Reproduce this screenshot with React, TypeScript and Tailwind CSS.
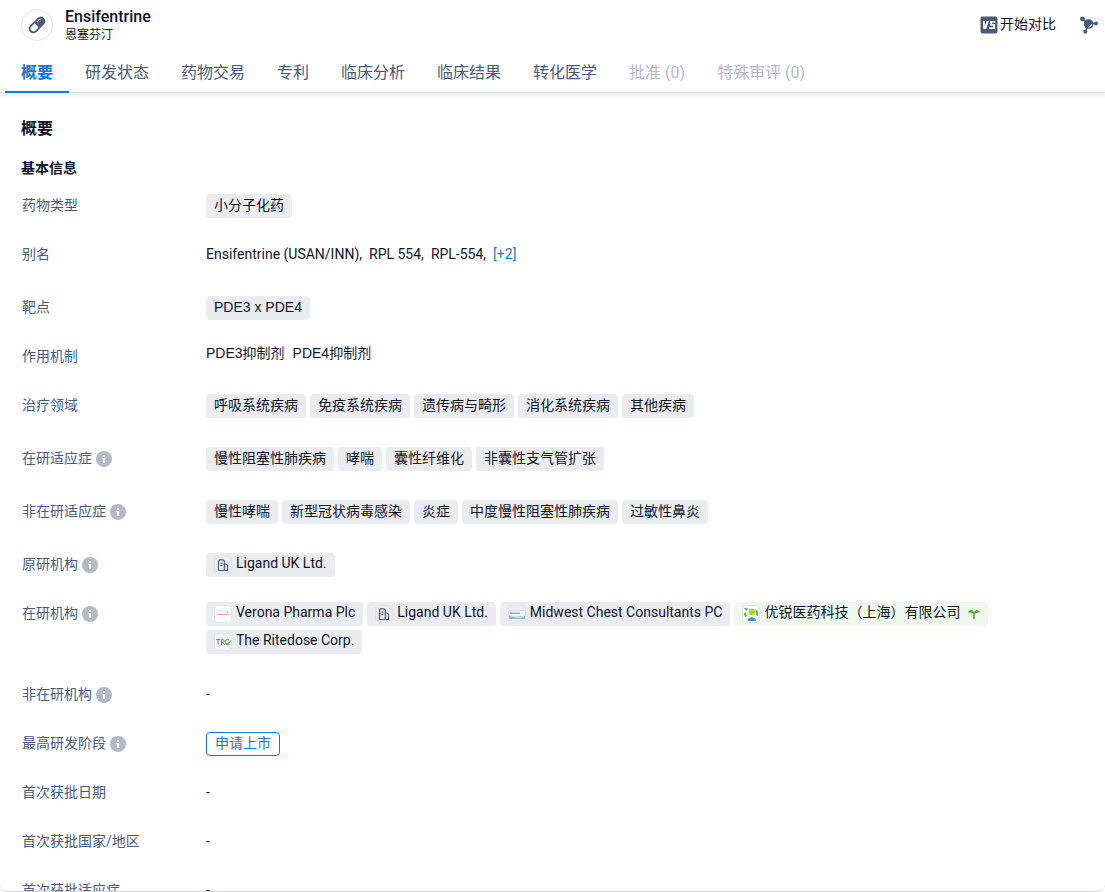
import type { ReactNode } from "react";

const tabs = [
  { label: "概要", active: true },
  { label: "研发状态" },
  { label: "药物交易" },
  { label: "专利" },
  { label: "临床分析" },
  { label: "临床结果" },
  { label: "转化医学" },
  { label: "批准 (0)", disabled: true },
  { label: "特殊审评 (0)", disabled: true },
];

function PillIcon() {
  return (
    <svg viewBox="0 0 18 18" className="size-[18px]" aria-hidden="true">
      <g transform="rotate(-45 9 9)">
        <rect x="-0.8" y="4.5" width="19.6" height="9" rx="4.5" fill="#495b7a" />
        <path d="M8.5 6.2H4a2.8 2.8 0 0 0 0 5.6h4.5z" fill="#fff" />
        <path d="M11 6.8h3.200a2 2 0 0 1 1.500.8" stroke="#fff" strokeWidth="1" fill="none" />
      </g>
    </svg>
  );
}

function VsIcon() {
  return (
    <svg viewBox="0 0 18 18" className="size-[18px]" aria-hidden="true">
      <rect x="0.5" y="0.5" width="17" height="17" rx="2" fill="#495b7a" />
      <path d="M2.800 5h2v5.200L6.600 5h2.200L6.200 13H3.400z" fill="#fff" />
      <path d="M15.400 5.900h-4.300v3h3.100v3.200H9.200" fill="none" stroke="#fff" strokeWidth="1.800" />
    </svg>
  );
}

function MoleculeIcon() {
  return (
    <svg viewBox="0 0 18 18" className="size-[18px]" aria-hidden="true">
      <g stroke="#495b7a" strokeWidth="1.6">
        <path d="M2.5 3l6 5M16 7.500H9M5.300 15.500l3-6" />
      </g>
      <g fill="#495b7a">
        <circle cx="8.600" cy="8" r="4.800" />
        <circle cx="2.400" cy="2.800" r="2.400" />
        <circle cx="16" cy="7.400" r="2" />
        <circle cx="5.300" cy="15.700" r="2" />
      </g>
      <path d="M11.600 8.200a3.200 3.200 0 0 1-3 3" stroke="#fff" strokeWidth="1" fill="none" />
    </svg>
  );
}

function InfoIcon() {
  return (
    <svg viewBox="0 0 16 16" className="size-4" aria-hidden="true">
      <circle cx="8" cy="8" r="8" fill="#b3b9c7" />
      <path d="M7 4h2v2H7zM6.500 7H9v5H7V8h-.5z" fill="#fff" />
    </svg>
  );
}

function BuildingLogo() {
  return (
    <svg viewBox="0 0 18 18" className="size-[18px]" aria-hidden="true">
      <rect x="0.5" y="0.5" width="17" height="17" rx="3" fill="#ebedf1" stroke="#e0e3ea" />
      <path
        d="M4.500 14.500V5L5.500 3.800h3.600L10.300 5v9.500zM10.300 8h1.700l1.500 1.200v5.300h-3.200"
        fill="none"
        stroke="#495b7a"
        strokeWidth="1.200"
      />
      <path d="M6.300 7h2.200M6.300 9.600h2.200" stroke="#495b7a" strokeWidth="1" />
    </svg>
  );
}

function VeronaLogo() {
  return (
    <svg viewBox="0 0 18 18" className="size-[18px]" aria-hidden="true">
      <rect x="0.5" y="0.5" width="17" height="17" rx="3" fill="#fff" stroke="#e0e3ea" />
      <path d="M3 9.500h12" stroke="#eba3b1" strokeWidth="1.200" />
      <circle cx="13.4" cy="6.8" r="0.9" fill="#c4b4bd" />
    </svg>
  );
}

function MidwestLogo() {
  return (
    <svg viewBox="0 0 18 18" className="size-[18px]" aria-hidden="true">
      <rect x="0.5" y="0.5" width="17" height="17" rx="3" fill="#ebedf1" stroke="#e0e3ea" />
      <path d="M1 5h16v9H1z" fill="#f3f7f9" />
      <path d="M1 5h16v1H1z" fill="#e4dadd" />
      <path d="M2 8.300h10" stroke="#7fabca" strokeWidth="1.400" />
      <path d="M1 10.500c4 0 8 2 16 0V14H1z" fill="#8fc2c1" />
      <path d="M3 11c4 .8 8 1.500 13 .5" fill="none" stroke="#e9f3f3" strokeWidth="0.800" />
    </svg>
  );
}

function YouruiLogo() {
  return (
    <svg viewBox="0 0 18 18" className="size-[18px]" aria-hidden="true">
      <rect x="0.5" y="0.5" width="17" height="17" rx="3" fill="#fff" stroke="#e0e3ea" />
      <circle cx="10" cy="7" r="3.4" fill="#b7d51d" />
      <path d="M2 3.5C4 2.6 5.6 2.5 6 4L4 6zM1.500 8l2.500-.5.8 3.500-1.600 1.500z" fill="#5bc15a" />
      <path d="M13.500 4l2.500 2.500v5l-2-1.500z" fill="#4aa7e0" />
      <path d="M5.600 16c0-5 8-5 8.600 0z" fill="#3995d8" />
    </svg>
  );
}

function RitedoseLogo() {
  return (
    <svg viewBox="0 0 18 18" className="size-[18px]" aria-hidden="true">
      <rect x="0.5" y="0.5" width="17" height="17" rx="3" fill="#f3f4f6" stroke="#e0e3ea" />
      <path
        d="M2 6.600h4.500M4.200 6.600v5M7.500 12V6.600h1.400a1.300 1.300 0 0 1 0 2.700H7.500M9 9.300l1.500 2.500"
        fill="none"
        stroke="#7b8580"
        strokeWidth="1"
      />
      <path
        d="M15 6.800a2.600 2.600 0 1 0 .4 4.400M12 10l2 1 3-3.500"
        fill="none"
        stroke="#79bb52"
        strokeWidth="1.200"
      />
    </svg>
  );
}

function Sprout() {
  return (
    <svg viewBox="0 0 12 12" className="ml-1 size-3" aria-hidden="true">
      <path d="M6 11V4" stroke="#44ae2c" strokeWidth="1.600" />
      <path
        d="M6 4.600C5.400 1.800 1.200.4 0 4.800 1.800 3.700 2.400 5.800 6 4.800zM6 4.600C6.600 1.800 10.800.4 12 4.800 10.200 3.700 9.600 5.800 6 4.800z"
        fill="#44ae2c"
      />
    </svg>
  );
}

function Chip({ children }: { children: ReactNode }) {
  return (
    <a href="#" className="flex h-6 items-center rounded bg-[#ebecf0] px-2 pb-0.5">
      {children}
    </a>
  );
}

function Org({ logo, name, local }: { logo: ReactNode; name: string; local?: boolean }) {
  return (
    <a
      href="#"
      className={`flex h-6 items-center gap-1 rounded px-2 ${local ? "bg-[#eff8ec]" : "bg-[#ebecf0]"}`}
    >
      {logo}
      <span className="pb-1">{name}</span>
      {local && <Sprout />}
    </a>
  );
}

type RowProps = { label: string; info?: boolean; loose?: boolean; children: ReactNode };

function Row({ label, info, loose, children }: RowProps) {
  return (
    <div className={`flex items-start ${loose ? "pb-[29px]" : "pb-[25px]"}`}>
      <dt className="flex h-6 w-46 shrink-0 items-center gap-1 text-[#495b7a]">
        <span className="pb-0.5">{label}</span>
        {info && (
          <button type="button" aria-label={`${label}说明`}>
            <InfoIcon />
          </button>
        )}
      </dt>
      <dd className="flex min-w-0 flex-1 flex-wrap gap-1 leading-[22px]">{children}</dd>
    </div>
  );
}

const chips = (names: string[]) => names.map((name) => <Chip key={name}>{name}</Chip>);

export default function App() {
  return (
    <div className="flex h-screen flex-col overflow-hidden rounded-b-lg border-b border-[#d4d6da] bg-white font-[Roboto,'Noto_Sans_CJK_SC',sans-serif] text-sm text-[#0d1428]">
      <header className="shrink-0 border-b border-[#dcdee3] shadow-[0_2px_6px_rgba(20,30,60,0.1)]">
        <div className="flex h-[50px] items-center justify-between pr-[7px] pl-[21px]">
          <div className="flex items-center gap-3">
            <span className="flex size-8 items-center justify-center rounded-full border border-[#dfe1e8]">
              <PillIcon />
            </span>
            <div>
              <h1 className="text-base leading-5 font-medium">Ensifentrine</h1>
              <p className="text-xs leading-4">恩塞芬汀</p>
            </div>
          </div>
          <div className="flex items-center gap-6">
            <button type="button" className="flex items-center gap-0.5">
              <VsIcon />
              <span className="pb-0.5">开始对比</span>
            </button>
            <button type="button" aria-label="结构">
              <MoleculeIcon />
            </button>
          </div>
        </div>
        <nav className="flex pl-[5px] text-base">
          {tabs.map((tab) => (
            <button
              key={tab.label}
              type="button"
              disabled={tab.disabled}
              className={`-mb-px h-[43px] border-b-2 px-4 pt-1 ${
                tab.active
                  ? "border-[#1677d9] font-bold text-[#1677d9]"
                  : tab.disabled
                    ? "border-transparent text-[#b3b9c7]"
                    : "border-transparent text-[#495b7a]"
              }`}
            >
              {tab.label}
            </button>
          ))}
        </nav>
      </header>
      <main className="min-h-0 flex-1 overflow-hidden px-[21px] pt-6">
        <h2 className="text-base leading-6 font-bold">概要</h2>
        <h3 className="mt-[15px] mb-3.5 leading-6 font-bold">基本信息</h3>
        <dl className="pl-px">
          <Row label="药物类型">{chips(["小分子化药"])}</Row>
          <Row label="别名" loose>
            <span className="mr-[3px]">Ensifentrine (USAN/INN),</span>
            <span className="mr-[3px]">RPL 554,</span>
            <span className="mr-[3px]">RPL-554,</span>
            <button type="button" className="text-[#1677d9]">
              [+2]
            </button>
          </Row>
          <Row label="靶点">
            <span className="font-['Liberation_Sans',sans-serif]">{chips(["PDE3 x PDE4"])}</span>
          </Row>
          <Row label="作用机制">
            <span className="flex gap-2 font-['Liberation_Sans','Noto_Sans_CJK_SC',sans-serif] leading-4">
              <a href="#">PDE3抑制剂</a>
              <a href="#">PDE4抑制剂</a>
            </span>
          </Row>
          <Row label="治疗领域" loose>
            {chips(["呼吸系统疾病", "免疫系统疾病", "遗传病与畸形", "消化系统疾病", "其他疾病"])}
          </Row>
          <Row label="在研适应症" info loose>
            {chips(["慢性阻塞性肺疾病", "哮喘", "囊性纤维化", "非囊性支气管扩张"])}
          </Row>
          <Row label="非在研适应症" info loose>
            {chips(["慢性哮喘", "新型冠状病毒感染", "炎症", "中度慢性阻塞性肺疾病", "过敏性鼻炎"])}
          </Row>
          <Row label="原研机构" info>
            <Org logo={<BuildingLogo />} name="Ligand UK Ltd." />
          </Row>
          <Row label="在研机构" info loose>
            <Org logo={<VeronaLogo />} name="Verona Pharma Plc" />
            <Org logo={<BuildingLogo />} name="Ligand UK Ltd." />
            <Org logo={<MidwestLogo />} name="Midwest Chest Consultants PC" />
            <Org logo={<YouruiLogo />} name="优锐医药科技（上海）有限公司" local />
            <Org logo={<RitedoseLogo />} name="The Ritedose Corp." />
          </Row>
          <Row label="非在研机构" info>
            -
          </Row>
          <Row label="最高研发阶段" info>
            <span className="flex h-6 items-center rounded border border-[#1677d9] px-2 pb-0.5 text-[#1677d9]">
              申请上市
            </span>
          </Row>
          <Row label="首次获批日期">-</Row>
          <Row label="首次获批国家/地区">-</Row>
          <Row label="首次获批适应症">-</Row>
        </dl>
      </main>
    </div>
  );
}
